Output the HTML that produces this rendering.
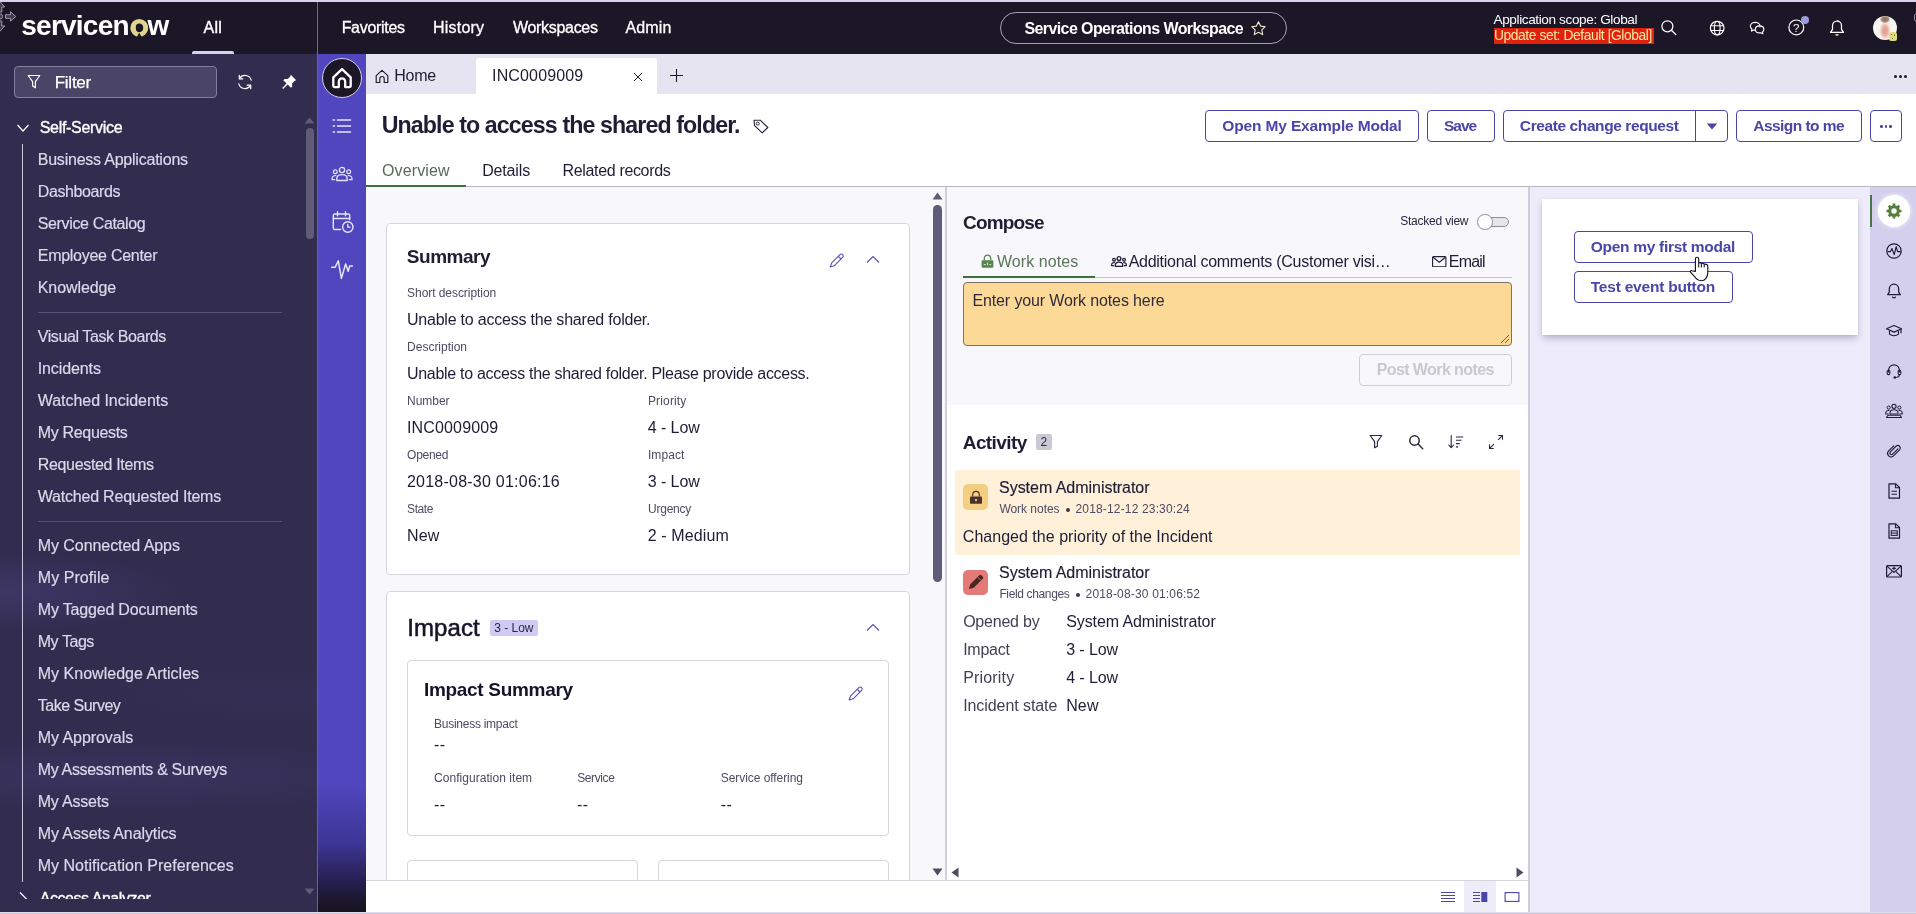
<!DOCTYPE html><html lang="en"><head><meta charset="utf-8"><title>INC0009009 | Service Operations Workspace</title><style>
html,body{margin:0;padding:0;}
body{width:1916px;height:914px;position:relative;overflow:hidden;background:#fff;font-family:"Liberation Sans", sans-serif;}
#app{position:absolute;left:0;top:0;width:1916px;height:914px;overflow:hidden;will-change:transform;}
#app>*{display:contents;}
#app>*>div,#app>*>svg,#app>*>span{position:absolute;box-sizing:border-box;}
.t,.tt{white-space:nowrap;line-height:1;display:block;}
</style></head><body><div id="app">
<div class="backdrop">
<div style="left:0px;top:0px;width:1916px;height:2px;background:#d6d2f0;"></div>
<div style="left:0px;top:2px;width:1916px;height:52px;background:#1b1727;"></div>
<div style="left:317px;top:2px;width:1px;height:52px;background:#6f6c7c;"></div>
<div style="left:0px;top:54px;width:318px;height:858px;background:#322c4f;background:radial-gradient(ellipse 190px 40px at 0 538px,rgba(72,64,122,.55),rgba(72,64,122,0) 100%),radial-gradient(ellipse 360px 36px at 110px 722px,rgba(66,59,112,.5),rgba(66,59,112,0) 100%),radial-gradient(ellipse 200px 30px at 300px 640px,rgba(60,54,100,.35),rgba(60,54,100,0) 100%),#322c4f;"></div>
<div style="left:318px;top:54px;width:48px;height:858px;background:#5046be;background:linear-gradient(180deg,#5046be 0,#5046be 730px,#3c3594 790px,#231e4a 830px,#1a1628 850px,#17131f 858px);"></div>
<div style="left:317px;top:54px;width:1px;height:858px;background:#6a6786;"></div>
<div style="left:366px;top:54px;width:1550px;height:40px;background:#e6e4f0;"></div>
<div style="left:366px;top:94px;width:1550px;height:92px;background:#ffffff;"></div>
<div style="left:366px;top:186px;width:1550px;height:1px;background:#b9b7c1;"></div>
<div style="left:366px;top:187px;width:1504px;height:693px;background:#f8f7fc;"></div>
</div>
<header class="polaris-header">
<span class="t" style="left:21.32px;top:12.00px;font-size:28px;color:#ffffff;font-weight:700;letter-spacing:-0.769px;">servicen</span><span class="t" style="left:130.62px;top:12.00px;font-size:28px;color:#e2d48c;font-weight:700;letter-spacing:-0.700px;letter-spacing:0;transform:scaleX(1.12);transform-origin:45% 50%;">o</span><span class="t" style="left:147.62px;top:12.00px;font-size:28px;color:#ffffff;font-weight:700;">w</span>
<svg style="left:129px;top:17px;" width="21" height="21" viewBox="0 0 21 21" fill="none"><circle cx="10.200" cy="10.900" r="6.600" stroke="#e2d48c" stroke-width="4.600"/><path d="M7.400 21L10.200 15.400 13 21z" fill="#1b1727"/></svg>
<svg style="left:0px;top:2px;" width="18" height="34" viewBox="0 0 18 34" fill="none"><g fill="#3f3d4a" stroke="#a9a7b4" stroke-width=".9" stroke-linejoin="round"><path d="M5.500 12.700h5V9.800l5.300 4.700-5.300 4.700v-2.900h-5z"/><path d="M-1.800 10V5H-4.700L0 -.3 4.700 5H1.800v5z"/><path d="M-1.800 19v5H-4.700L0 29.300 4.700 24H1.800v-5z"/><circle cx="0" cy="14.500" r="2.600"/></g></svg>
<span class="t" style="left:203.44px;top:20.00px;font-size:16px;color:#ffffff;letter-spacing:0.269px;-webkit-text-stroke:0.4px #ffffff;">All</span>
<div style="left:192px;top:51px;width:42px;height:3px;background:#d5d1f0;border-radius:2px 2px 0 0;"></div>
<span class="t" style="left:341.64px;top:20.00px;font-size:16px;color:#ffffff;letter-spacing:-0.297px;-webkit-text-stroke:0.3px #ffffff;">Favorites</span>
<span class="t" style="left:432.94px;top:20.00px;font-size:16px;color:#ffffff;letter-spacing:0.223px;-webkit-text-stroke:0.3px #ffffff;">History</span>
<span class="t" style="left:512.94px;top:20.00px;font-size:16px;color:#ffffff;letter-spacing:-0.302px;-webkit-text-stroke:0.3px #ffffff;">Workspaces</span>
<span class="t" style="left:625.44px;top:20.00px;font-size:16px;color:#ffffff;letter-spacing:0.140px;-webkit-text-stroke:0.3px #ffffff;">Admin</span>
<div style="left:1000px;top:12px;width:287px;height:32px;border:1px solid #a5a3b0;border-radius:16px;"></div>
<span class="t" style="left:1024.44px;top:21.00px;font-size:16px;color:#ffffff;font-weight:700;letter-spacing:-0.595px;">Service Operations Workspace</span>
<svg style="left:1250.3px;top:20px;" width="17" height="17" viewBox="0 0 17 17" fill="none"><path d="M8.5 1.8l2.05 4.3 4.7.62-3.45 3.25.87 4.66L8.5 12.35 4.33 14.63l.87-4.66L1.75 6.72l4.7-.62z" stroke="#f3ead2" stroke-width="1.1" stroke-linejoin="round"/></svg>
<span class="t" style="left:1493.52px;top:13.00px;font-size:13.6px;color:#ffffff;letter-spacing:-0.393px;">Application scope: Global</span>
<div style="left:1494px;top:28px;width:159.5px;height:15.7px;background:#e0220f;"></div>
<span class="t" style="left:1494.02px;top:29.00px;font-size:13.8px;color:#fbe7a3;letter-spacing:-0.416px;">Update set: Default [Global]</span>
<svg style="left:1660px;top:19px;" width="18" height="18" viewBox="0 0 18 18" fill="none"><circle cx="7.400" cy="7.300" r="5.500" stroke="#fff" stroke-width="1.250"/><path d="M11.400 11.300L15.800 15.500" stroke="#fff" stroke-width="1.250" stroke-linecap="round"/></svg>
<svg style="left:1708px;top:19px;" width="18" height="18" viewBox="0 0 18 18" fill="none"><circle cx="9.200" cy="9.100" r="6.800" stroke="#fff" stroke-width="1.200"/><ellipse cx="9.200" cy="9.100" rx="2.900" ry="6.800" stroke="#fff" stroke-width="1.100"/><path d="M2.700 6.700h13M2.700 11.500h13" stroke="#fff" stroke-width="1.100"/></svg>
<svg style="left:1748px;top:19px;" width="18" height="18" viewBox="0 0 18 18" fill="none"><path d="M7.200 3.300c2.700 0 4.800 1.700 4.800 3.900 0 .3 0 .5-.1.800M7.200 3.300c-2.700 0-4.800 1.700-4.800 3.900 0 1.100.6 2.100 1.500 2.800l-.4 2.100 2.300-1.100c.4.100.9.100 1.400.100" stroke="#fff" stroke-width="1.150" stroke-linejoin="round" stroke-linecap="round"/><path d="M11.600 6.900c2.400 0 4.200 1.500 4.200 3.500 0 1-.5 1.900-1.300 2.500l.3 1.900-2.100-1c-.4.100-.7.100-1.100.100-2.400 0-4.200-1.500-4.200-3.500s1.800-3.500 4.200-3.500z" stroke="#fff" stroke-width="1.150" stroke-linejoin="round"/></svg>
<svg style="left:1787px;top:18px;" width="19" height="19" viewBox="0 0 19 19" fill="none"><circle cx="9.300" cy="9.400" r="7.400" stroke="#fff" stroke-width="1.200"/></svg>
<span class="t" style="left:1792.90px;top:23.00px;font-size:11.5px;color:#ffffff;letter-spacing:-0.288px;letter-spacing:0;">?</span>
<div style="left:1801px;top:16px;width:8px;height:8px;background:#9c9cd8;border-radius:50%;"></div>
<svg style="left:1828px;top:19px;" width="18" height="18" viewBox="0 0 18 18" fill="none"><path d="M9 2c-2.700 0-4.500 2.100-4.500 4.700v3.600L2.500 13.400h13l-2-3.100V6.700C13.500 4.100 11.700 2 9 2z" stroke="#fff" stroke-width="1.250" stroke-linejoin="round"/><path d="M7.700 15.200a1.400 1.400 0 0 0 2.600 0" stroke="#fff" stroke-width="1.200"/></svg>
<div style="left:1873px;top:16px;width:24px;height:24px;background:#f8f6f3;border-radius:50%;overflow:hidden;background:radial-gradient(ellipse 5.500px 4px at 50% 14%,#8a6a55 0,#a58672 60%,rgba(200,170,150,0) 100%),radial-gradient(ellipse 5.800px 9.500px at 50% 62%,#e59a8c 0,#eab0a2 50%,#f3ddd4 80%,rgba(248,246,243,0) 100%),#f8f6f3;"></div>
<div style="left:1888.5px;top:32px;width:8.5px;height:8.5px;background:#e6da7c;border-radius:2.500px;background:radial-gradient(circle 0.700px at 30% 30%,#3f7d4a 0,#3f7d4a 90%,transparent 100%),radial-gradient(circle 0.700px at 70% 35%,#3f7d4a 0,#3f7d4a 90%,transparent 100%),radial-gradient(circle 0.700px at 45% 70%,#3f7d4a 0,#3f7d4a 90%,transparent 100%),#e6da7c;"></div>
<div style="left:1914px;top:13px;width:8px;height:8.5px;border:1px solid #8f8d9b;border-radius:3px;"></div>
</header>
<nav class="all-menu">
<div style="left:14px;top:66px;width:203px;height:32px;background:#4a4566;border:1px solid #827e9c;border-radius:4px;"></div>
<svg style="left:27px;top:74px;" width="14" height="16" viewBox="0 0 14 16" fill="none"><path d="M1.2 1.5h11.6L8.4 7.6v6.2L5.6 12V7.6z" stroke="#fff" stroke-width="1.2" stroke-linejoin="round"/></svg>
<span class="t" style="left:54.70px;top:74.00px;font-size:17px;color:#ffffff;letter-spacing:-0.248px;-webkit-text-stroke:0.25px #ffffff;">Filter</span>
<svg style="left:236px;top:73px;" width="18" height="18" viewBox="0 0 18 18" fill="none"><path d="M15.2 7.2A6.4 6.4 0 0 0 3.5 5.6M2.8 10.8a6.4 6.4 0 0 0 11.7 1.6" stroke="#fff" stroke-width="1.2" stroke-linecap="round"/><path d="M3.3 2.3v3.5h3.5M14.7 15.7v-3.5h-3.5" stroke="#fff" stroke-width="1.2" stroke-linecap="round" stroke-linejoin="round"/></svg>
<svg style="left:280px;top:73px;" width="18" height="18" viewBox="0 0 18 18" fill="none"><path d="M10.8 1.8l5.4 5.4-1.5.6-2.6 2.6.1 3.1-1.3 1.3-3.2-3.2-4.6 4.3-.9-.9 4.3-4.6-3.2-3.2 1.3-1.3 3.1.1 2.6-2.6z" fill="#fff"/></svg>
<svg style="left:16px;top:123px;" width="14" height="10" viewBox="0 0 14 10" fill="none"><path d="M1.5 2l5.5 6 5.5-6" stroke="#fff" stroke-width="1.2"/></svg>
<span class="t" style="left:39.74px;top:120.00px;font-size:16px;color:#ffffff;letter-spacing:-0.312px;-webkit-text-stroke:0.35px #ffffff;">Self-Service</span>
<div style="left:22px;top:144px;width:1px;height:738px;background:#c9c5dd;"></div>
<span class="t" style="left:37.74px;top:152.00px;font-size:16px;color:#dbd8ea;letter-spacing:-0.222px;-webkit-text-stroke:0.2px #dbd8ea;">Business Applications</span>
<span class="t" style="left:37.74px;top:184.00px;font-size:16px;color:#dbd8ea;letter-spacing:-0.385px;-webkit-text-stroke:0.2px #dbd8ea;">Dashboards</span>
<span class="t" style="left:37.74px;top:216.00px;font-size:16px;color:#dbd8ea;letter-spacing:-0.352px;-webkit-text-stroke:0.2px #dbd8ea;">Service Catalog</span>
<span class="t" style="left:37.74px;top:248.00px;font-size:16px;color:#dbd8ea;letter-spacing:-0.272px;-webkit-text-stroke:0.2px #dbd8ea;">Employee Center</span>
<span class="t" style="left:37.74px;top:280.00px;font-size:16px;color:#dbd8ea;letter-spacing:-0.081px;-webkit-text-stroke:0.2px #dbd8ea;">Knowledge</span>
<span class="t" style="left:37.74px;top:329.00px;font-size:16px;color:#dbd8ea;letter-spacing:-0.404px;-webkit-text-stroke:0.2px #dbd8ea;">Visual Task Boards</span>
<span class="t" style="left:37.74px;top:361.00px;font-size:16px;color:#dbd8ea;letter-spacing:-0.103px;-webkit-text-stroke:0.2px #dbd8ea;">Incidents</span>
<span class="t" style="left:37.74px;top:393.00px;font-size:16px;color:#dbd8ea;letter-spacing:-0.038px;-webkit-text-stroke:0.2px #dbd8ea;">Watched Incidents</span>
<span class="t" style="left:37.74px;top:425.00px;font-size:16px;color:#dbd8ea;letter-spacing:-0.326px;-webkit-text-stroke:0.2px #dbd8ea;">My Requests</span>
<span class="t" style="left:37.74px;top:457.00px;font-size:16px;color:#dbd8ea;letter-spacing:-0.331px;-webkit-text-stroke:0.2px #dbd8ea;">Requested Items</span>
<span class="t" style="left:37.74px;top:489.00px;font-size:16px;color:#dbd8ea;letter-spacing:-0.202px;-webkit-text-stroke:0.2px #dbd8ea;">Watched Requested Items</span>
<span class="t" style="left:37.74px;top:538.00px;font-size:16px;color:#dbd8ea;letter-spacing:-0.061px;-webkit-text-stroke:0.2px #dbd8ea;">My Connected Apps</span>
<span class="t" style="left:37.74px;top:570.00px;font-size:16px;color:#dbd8ea;letter-spacing:0.066px;-webkit-text-stroke:0.2px #dbd8ea;">My Profile</span>
<span class="t" style="left:37.74px;top:602.00px;font-size:16px;color:#dbd8ea;letter-spacing:-0.179px;-webkit-text-stroke:0.2px #dbd8ea;">My Tagged Documents</span>
<span class="t" style="left:37.74px;top:634.00px;font-size:16px;color:#dbd8ea;letter-spacing:-0.444px;-webkit-text-stroke:0.2px #dbd8ea;">My Tags</span>
<span class="t" style="left:37.74px;top:666.00px;font-size:16px;color:#dbd8ea;letter-spacing:0.018px;-webkit-text-stroke:0.2px #dbd8ea;">My Knowledge Articles</span>
<span class="t" style="left:37.74px;top:698.00px;font-size:16px;color:#dbd8ea;letter-spacing:-0.493px;-webkit-text-stroke:0.2px #dbd8ea;">Take Survey</span>
<span class="t" style="left:37.74px;top:730.00px;font-size:16px;color:#dbd8ea;letter-spacing:-0.057px;-webkit-text-stroke:0.2px #dbd8ea;">My Approvals</span>
<span class="t" style="left:37.74px;top:762.00px;font-size:16px;color:#dbd8ea;letter-spacing:-0.338px;-webkit-text-stroke:0.2px #dbd8ea;">My Assessments &amp; Surveys</span>
<span class="t" style="left:37.74px;top:794.00px;font-size:16px;color:#dbd8ea;letter-spacing:-0.211px;-webkit-text-stroke:0.2px #dbd8ea;">My Assets</span>
<span class="t" style="left:37.74px;top:826.00px;font-size:16px;color:#dbd8ea;letter-spacing:-0.093px;-webkit-text-stroke:0.2px #dbd8ea;">My Assets Analytics</span>
<span class="t" style="left:37.74px;top:858.00px;font-size:16px;color:#dbd8ea;letter-spacing:0.015px;-webkit-text-stroke:0.2px #dbd8ea;">My Notification Preferences</span>
<div style="left:38px;top:312px;width:244px;height:1px;background:#57536f;"></div>
<div style="left:38px;top:521px;width:244px;height:1px;background:#57536f;"></div>
<div style="left:0;top:884px;width:300px;height:14.5px;overflow:hidden;"><span class="tt" style="position:absolute;left:39.7px;top:6.900px;font-size:16px;color:#fff;letter-spacing:-0.45px;-webkit-text-stroke:0.35px #fff;">Access Analyzer</span><svg style="position:absolute;left:18px;top:6.500px" width="10" height="16" viewBox="0 0 10 16" fill="none"><path d="M2 1.500l6.500 6.500-6.500 6.500" stroke="#fff" stroke-width="1.200"/></svg></div>
<div style="left:305.5px;top:127.5px;width:8.5px;height:111px;background:#5f5b78;border-radius:4.5px;"></div>
<svg style="left:304px;top:117px;" width="11" height="7" viewBox="0 0 11 7" fill="none"><path d="M0.5 6.5L5.5 0.5l5 6z" fill="#5f5b78"/></svg>
<svg style="left:304px;top:888px;" width="11" height="7" viewBox="0 0 11 7" fill="none"><path d="M0.5 0.5L5.5 6.5l5-6z" fill="#5f5b78"/></svg>
</nav>
<nav class="workspace-rail">
<div style="left:322px;top:58px;width:40px;height:40px;background:#1b1727;border-radius:50%;border:1px solid #d5d1f0;"></div>
<svg style="left:330px;top:66px;" width="24" height="24" viewBox="0 0 24 24" fill="none"><path d="M3.300 11.300L12 3.100l8.700 8.200v8.200a1.600 1.600 0 0 1-1.600 1.600h-3.900v-5.600a3.200 3.200 0 0 0-6.400 0v5.600H4.900a1.600 1.600 0 0 1-1.600-1.600z" stroke="#fff" stroke-width="2.300" stroke-linejoin="round"/></svg>
<svg style="left:332px;top:117px;" width="20" height="18" viewBox="0 0 20 18" fill="none"><path d="M5.5 3h13M5.5 9h13M5.5 15h13" stroke="#e8e5fa" stroke-width="1.5" stroke-linecap="round"/><path d="M1.2 3h1.3M1.2 9h1.3M1.2 15h1.3" stroke="#e8e5fa" stroke-width="1.5" stroke-linecap="round"/></svg>
<svg style="left:331px;top:165px;" width="22" height="18" viewBox="0 0 22 18" fill="none"><circle cx="11" cy="5" r="2.6" stroke="#e8e5fa" stroke-width="1.3"/><path d="M5.8 15.5v-1.8c0-2.4 2-4 5.2-4s5.2 1.600 5.200 4v1.800z" stroke="#e8e5fa" stroke-width="1.3" stroke-linejoin="round"/><circle cx="4.3" cy="6.800" r="1.9" stroke="#e8e5fa" stroke-width="1.2"/><circle cx="17.7" cy="6.800" r="1.9" stroke="#e8e5fa" stroke-width="1.2"/><path d="M5.300 10.600c-2.500-.4-4.300.9-4.300 2.800v1.300h3.200M16.700 10.600c2.500-.4 4.300.9 4.300 2.800v1.300h-3.200" stroke="#e8e5fa" stroke-width="1.2" stroke-linejoin="round"/></svg>
<svg style="left:331px;top:210px;" width="24" height="24" viewBox="0 0 24 24" fill="none"><path d="M9.500 19.500H3.800a1.500 1.500 0 0 1-1.500-1.500V5.500A1.500 1.500 0 0 1 3.800 4h13.400a1.500 1.500 0 0 1 1.500 1.500v4.300" stroke="#e8e5fa" stroke-width="1.4" stroke-linecap="round"/><path d="M6.500 1.800v4M14.500 1.800v4M2.500 8.500h16" stroke="#e8e5fa" stroke-width="1.400" stroke-linecap="round"/><circle cx="16.800" cy="17" r="5.200" stroke="#e8e5fa" stroke-width="1.400"/><path d="M16.800 14.300V17.200h2.200" stroke="#e8e5fa" stroke-width="1.300" stroke-linecap="round" stroke-linejoin="round"/></svg>
<svg style="left:331px;top:259px;" width="22" height="21" viewBox="0 0 22 21" fill="none"><path d="M0.600 8.200h3.600l3.100-6.400 3.100 17.600 4.200-14.400 2.600 7.200 1.500-5.200h2.800" stroke="#e8e5fa" stroke-width="1.500" stroke-linejoin="round" stroke-linecap="round"/></svg>
</nav>
<div class="chrome-tabs">
<svg style="left:375px;top:69px;" width="14" height="15" viewBox="0 0 14 15" fill="none"><path d="M1.2 6.6L7 1.3l5.8 5.3v6.9H9.200V9.700a2.200 2.200 0 0 0-4.400 0v3.800H1.200z" stroke="#1d1a2e" stroke-width="1.15" stroke-linejoin="round"/></svg>
<span class="t" style="left:394.24px;top:68.00px;font-size:16px;color:#1f1c33;letter-spacing:-0.223px;">Home</span>
<div style="left:476px;top:58px;width:181px;height:36px;background:#ffffff;border-radius:3px 3px 0 0;"></div>
<span class="t" style="left:492.04px;top:68.00px;font-size:16px;color:#1f1c33;letter-spacing:0.153px;">INC0009009</span>
<svg style="left:632px;top:71px;" width="12" height="12" viewBox="0 0 12 12" fill="none"><path d="M2 2l8 8M10 2l-8 8" stroke="#1d1a2e" stroke-width="1"/></svg>
<svg style="left:669px;top:68px;" width="16" height="16" viewBox="0 0 16 16" fill="none"><path d="M7.500 1v13M1 7.500h13" stroke="#1d1a2e" stroke-width="1.100"/></svg>
<div style="left:1893.5px;top:74.5px;width:3px;height:3px;background:#1d1a2e;border-radius:50%;"></div>
<div style="left:1898.5px;top:74.5px;width:3px;height:3px;background:#1d1a2e;border-radius:50%;"></div>
<div style="left:1903.5px;top:74.5px;width:3px;height:3px;background:#1d1a2e;border-radius:50%;"></div>
</div>
<section class="record-header">
<span class="t" style="left:381.69px;top:114.00px;font-size:23.2px;color:#1f1c33;font-weight:700;letter-spacing:-0.894px;">Unable to access the shared folder.</span>
<svg style="left:752px;top:118px;" width="18" height="16" viewBox="0 0 18 16" fill="none"><path d="M2 2.200h6.200l7.600 7.300-5.600 5.400L2.600 7.600z" stroke="#2a2740" stroke-width="1.15" stroke-linejoin="round"/><circle cx="5.800" cy="5.600" r="1.500" stroke="#2a2740" stroke-width="1"/></svg>
<span class="t" style="left:381.94px;top:163.00px;font-size:16px;color:#586b57;letter-spacing:0.133px;">Overview</span>
<span class="t" style="left:482.14px;top:163.00px;font-size:16px;color:#1f1c33;letter-spacing:-0.148px;">Details</span>
<span class="t" style="left:562.44px;top:163.00px;font-size:16px;color:#1f1c33;letter-spacing:-0.331px;">Related records</span>
<div style="left:366px;top:184.5px;width:100px;height:2.5px;background:#3f6f3f;"></div>
<div style="left:1205px;top:110px;width:214px;height:32px;background:#fff;border:1px solid #4a46a8;border-radius:4px;"></div>
<span class="t" style="left:1222.36px;top:118.00px;font-size:15.5px;color:#4a46a8;font-weight:700;letter-spacing:-0.155px;">Open My Example Modal</span>
<div style="left:1427px;top:110px;width:68px;height:32px;background:#fff;border:1px solid #4a46a8;border-radius:4px;"></div>
<span class="t" style="left:1444.06px;top:118.00px;font-size:15.5px;color:#4a46a8;font-weight:700;letter-spacing:-1.064px;">Save</span>
<div style="left:1503px;top:110px;width:225px;height:32px;background:#fff;border:1px solid #4a46a8;border-radius:4px;"></div>
<span class="t" style="left:1519.86px;top:118.00px;font-size:15.5px;color:#4a46a8;font-weight:700;letter-spacing:-0.401px;">Create change request</span>
<div style="left:1695px;top:110px;width:1px;height:32px;background:#4a46a8;"></div>
<svg style="left:1706px;top:123px;" width="12" height="7" viewBox="0 0 12 7" fill="none"><path d="M0.800 0.500h10.400L6 6.500z" fill="#4a46a8"/></svg>
<div style="left:1736px;top:110px;width:126px;height:32px;background:#fff;border:1px solid #4a46a8;border-radius:4px;"></div>
<span class="t" style="left:1753.26px;top:118.00px;font-size:15.5px;color:#4a46a8;font-weight:700;letter-spacing:-0.547px;">Assign to me</span>
<div style="left:1870px;top:110px;width:32px;height:32px;background:#fff;border:1px solid #4a46a8;border-radius:4px;"></div>
<div style="left:1880px;top:125px;width:2.6px;height:2.6px;background:#4a46a8;border-radius:50%;"></div>
<div style="left:1884.7px;top:125px;width:2.6px;height:2.6px;background:#4a46a8;border-radius:50%;"></div>
<div style="left:1889.4px;top:125px;width:2.6px;height:2.6px;background:#4a46a8;border-radius:50%;"></div>
</section>
<main class="overview-panel">
<div style="left:386px;top:223px;width:524px;height:352px;background:#fff;border:1px solid #d7d6de;border-radius:4px;"></div>
<span class="t" style="left:406.83px;top:247.00px;font-size:19px;color:#1f1c33;font-weight:700;letter-spacing:-0.488px;">Summary</span>
<svg style="left:828.8px;top:252.5px;" width="15.5" height="15.5" viewBox="0 0 15.5 15.5" fill="none"><path d="M10.900 1.700a1.900 1.900 0 0 1 2.700 2.700L5.200 12.800l-3.900 1.200 1.200-3.900z" stroke="#5551b3" stroke-width="1.1" stroke-linejoin="round"/><path d="M9.300 3.300l2.700 2.700" stroke="#5551b3" stroke-width="1.100"/></svg>
<svg style="left:866px;top:255px;" width="14" height="9" viewBox="0 0 14 9" fill="none"><path d="M1 7.500l6-6 6 6" stroke="#5551b3" stroke-width="1.1"/></svg>
<span class="t" style="left:407.08px;top:287.00px;font-size:12px;color:#4d4b62;letter-spacing:-0.057px;">Short description</span>
<span class="t" style="left:406.94px;top:312.00px;font-size:16px;color:#1f1c33;letter-spacing:-0.212px;">Unable to access the shared folder.</span>
<span class="t" style="left:407.08px;top:341.00px;font-size:12px;color:#4d4b62;letter-spacing:-0.009px;">Description</span>
<span class="t" style="left:406.94px;top:366.00px;font-size:16px;color:#1f1c33;letter-spacing:-0.298px;">Unable to access the shared folder. Please provide access.</span>
<span class="t" style="left:407.08px;top:395.00px;font-size:12px;color:#4d4b62;letter-spacing:-0.050px;">Number</span>
<span class="t" style="left:406.94px;top:420.00px;font-size:16px;color:#1f1c33;letter-spacing:0.164px;">INC0009009</span>
<span class="t" style="left:407.08px;top:449.00px;font-size:12px;color:#4d4b62;letter-spacing:-0.273px;">Opened</span>
<span class="t" style="left:406.94px;top:474.00px;font-size:16px;color:#1f1c33;letter-spacing:0.236px;">2018-08-30 01:06:16</span>
<span class="t" style="left:407.08px;top:503.00px;font-size:12px;color:#4d4b62;letter-spacing:-0.448px;">State</span>
<span class="t" style="left:406.94px;top:528.00px;font-size:16px;color:#1f1c33;letter-spacing:0.152px;">New</span>
<span class="t" style="left:647.98px;top:395.00px;font-size:12px;color:#4d4b62;letter-spacing:0.142px;">Priority</span>
<span class="t" style="left:647.84px;top:420.00px;font-size:16px;color:#1f1c33;letter-spacing:-0.091px;">4 - Low</span>
<span class="t" style="left:647.98px;top:449.00px;font-size:12px;color:#4d4b62;letter-spacing:0.065px;">Impact</span>
<span class="t" style="left:647.84px;top:474.00px;font-size:16px;color:#1f1c33;letter-spacing:-0.091px;">3 - Low</span>
<span class="t" style="left:647.98px;top:503.00px;font-size:12px;color:#4d4b62;letter-spacing:-0.225px;">Urgency</span>
<span class="t" style="left:647.84px;top:528.00px;font-size:16px;color:#1f1c33;letter-spacing:0.099px;">2 - Medium</span>
<div style="left:386px;top:591px;width:524px;height:320px;background:#fff;border:1px solid #d7d6de;border-radius:4px;"></div>
<span class="t" style="left:407.16px;top:616.00px;font-size:24px;color:#17142a;letter-spacing:0.110px;-webkit-text-stroke:0.55px #17142a;">Impact</span>
<div style="left:490px;top:620px;width:48px;height:16px;background:#cfcbf3;border-radius:2px;"></div>
<span class="t" style="left:494.28px;top:622.00px;font-size:12px;color:#2a2740;letter-spacing:-0.020px;">3 - Low</span>
<svg style="left:866px;top:623px;" width="14" height="9" viewBox="0 0 14 9" fill="none"><path d="M1 7.500l6-6 6 6" stroke="#5551b3" stroke-width="1.1"/></svg>
<div style="left:407px;top:660px;width:482px;height:175.5px;background:#fff;border:1px solid #d7d6de;border-radius:4px;"></div>
<span class="t" style="left:423.94px;top:680.00px;font-size:19px;color:#17142a;font-weight:700;letter-spacing:-0.303px;">Impact Summary</span>
<svg style="left:847.8px;top:685.5px;" width="15.5" height="15.5" viewBox="0 0 15.5 15.5" fill="none"><path d="M10.900 1.700a1.900 1.900 0 0 1 2.700 2.700L5.200 12.800l-3.900 1.200 1.200-3.900z" stroke="#5551b3" stroke-width="1.1" stroke-linejoin="round"/><path d="M9.300 3.300l2.700 2.700" stroke="#5551b3" stroke-width="1.100"/></svg>
<span class="t" style="left:434.08px;top:718.00px;font-size:12px;color:#4d4b62;letter-spacing:-0.267px;">Business impact</span>
<span class="t" style="left:433.94px;top:737.00px;font-size:16px;color:#1f1c33;letter-spacing:0.364px;">--</span>
<span class="t" style="left:434.08px;top:772.00px;font-size:12px;color:#4d4b62;letter-spacing:0.038px;">Configuration item</span>
<span class="t" style="left:433.94px;top:797.00px;font-size:16px;color:#1f1c33;letter-spacing:0.364px;">--</span>
<span class="t" style="left:577.18px;top:772.00px;font-size:12px;color:#4d4b62;letter-spacing:-0.396px;">Service</span>
<span class="t" style="left:577.04px;top:797.00px;font-size:16px;color:#1f1c33;letter-spacing:0.364px;">--</span>
<span class="t" style="left:720.78px;top:772.00px;font-size:12px;color:#4d4b62;letter-spacing:-0.061px;">Service offering</span>
<span class="t" style="left:720.64px;top:797.00px;font-size:16px;color:#1f1c33;letter-spacing:0.464px;">--</span>
<div style="left:407px;top:860px;width:231px;height:40px;background:#fff;border:1px solid #d7d6de;border-radius:4px;"></div>
<div style="left:658px;top:860px;width:231px;height:40px;background:#fff;border:1px solid #d7d6de;border-radius:4px;"></div>
<svg style="left:932px;top:192px;" width="11" height="8" viewBox="0 0 11 8" fill="none"><path d="M0.500 7.500L5.500 0.500l5 7z" fill="#5f5c78"/></svg>
<div style="left:933px;top:205px;width:9px;height:377px;background:#5f5c78;border-radius:4.500px;"></div>
<svg style="left:932px;top:868px;" width="11" height="8" viewBox="0 0 11 8" fill="none"><path d="M0.500 0.500L5.500 7.500l5-7z" fill="#4f4d60"/></svg>
<div style="left:945px;top:187px;width:2px;height:693px;background:#d2d0da;"></div>
</main>
<section class="activity-panel">
<div style="left:947px;top:405px;width:581px;height:475px;background:#ffffff;"></div>
<span class="t" style="left:963.04px;top:213.00px;font-size:19px;color:#1f1c33;font-weight:700;letter-spacing:-0.850px;">Compose</span>
<span class="t" style="left:1400.18px;top:215.00px;font-size:12px;color:#2a2740;letter-spacing:-0.215px;">Stacked view</span>
<div style="left:1479px;top:217px;width:30px;height:10px;background:#e6e5ea;border:1px solid #8f8d99;border-radius:5px;"></div>
<div style="left:1477px;top:214px;width:15.5px;height:15.5px;background:#ffffff;border:1px solid #8f8d99;border-radius:50%;"></div>
<svg style="left:980.5px;top:253.7px;" width="13" height="14" viewBox="0 0 13 14" fill="none"><path d="M3.300 6.300V4.300a3.200 3.200 0 0 1 6.400 0v2" stroke="#568552" stroke-width="1.250"/><rect x=".6" y="6.300" width="11.800" height="7.400" rx="1.200" fill="#568552"/><path d="M2.800 10.600h2M8.200 10.600h2M6.500 8.600v2.600" stroke="#eef3ea" stroke-width=".9"/></svg>
<span class="t" style="left:996.94px;top:254.00px;font-size:16px;color:#5c755b;letter-spacing:0.066px;">Work notes</span>
<div style="left:963px;top:276px;width:132px;height:2px;background:#3f6f3f;"></div>
<div style="left:1095px;top:277px;width:417px;height:1px;background:#c4c2cc;"></div>
<svg style="left:1111px;top:255px;" width="16" height="12" viewBox="0 0 16 12" fill="none"><circle cx="8" cy="3.600" r="1.900" stroke="#1f1c33" stroke-width="1.300"/><path d="M4.300 11.300V10c0-1.800 1.500-2.900 3.700-2.900s3.700 1.100 3.700 2.900v1.300z" stroke="#1f1c33" stroke-width="1.300" stroke-linejoin="round"/><circle cx="3" cy="4.800" r="1.400" stroke="#1f1c33" stroke-width="1.200"/><circle cx="13" cy="4.800" r="1.400" stroke="#1f1c33" stroke-width="1.200"/><path d="M3.800 7.700C2 7.400.600 8.300.600 9.700v.900h2.500M12.200 7.700c1.800-.3 3.200.600 3.200 2v.900h-2.500" stroke="#1f1c33" stroke-width="1.200" stroke-linejoin="round"/></svg>
<span class="t" style="left:1128.64px;top:254.00px;font-size:16px;color:#1f1c33;letter-spacing:-0.267px;">Additional comments (Customer visi…</span>
<svg style="left:1432px;top:255.5px;" width="14.5" height="11.5" viewBox="0 0 14.5 11.5" fill="none"><rect x=".6" y=".6" width="13.300" height="10.300" rx="1" stroke="#1f1c33" stroke-width="1.1"/><path d="M1 1.200l6.250 5 6.250-5" stroke="#1f1c33" stroke-width="1.100"/></svg>
<span class="t" style="left:1448.84px;top:254.00px;font-size:16px;color:#1f1c33;letter-spacing:-0.824px;">Email</span>
<div style="left:963px;top:282px;width:549px;height:64px;background:#fdd998;border:1px solid #7d7465;border-radius:4px;"></div>
<span class="t" style="left:972.44px;top:293.00px;font-size:16px;color:#2e2a3a;letter-spacing:-0.122px;">Enter your Work notes here</span>
<svg style="left:1500px;top:334px;" width="10" height="10" viewBox="0 0 10 10" fill="none"><path d="M9 1L1 9M9 5L5 9" stroke="#6b6250" stroke-width="1"/></svg>
<div style="left:1359px;top:354px;width:153px;height:32px;border:1px solid #cfced6;border-radius:4px;"></div>
<span class="t" style="left:1376.64px;top:362.00px;font-size:16px;color:#c9c8d0;font-weight:700;letter-spacing:-0.581px;">Post Work notes</span>
<span class="t" style="left:962.74px;top:433.00px;font-size:19px;color:#1f1c33;font-weight:700;letter-spacing:-0.580px;">Activity</span>
<div style="left:1036px;top:434px;width:16px;height:16px;background:#cbc9d4;border-radius:2px;"></div>
<span class="t" style="left:1040.38px;top:436.00px;font-size:12px;color:#2a2740;letter-spacing:-0.300px;letter-spacing:0;">2</span>
<svg style="left:1369px;top:434px;" width="14" height="16" viewBox="0 0 14 16" fill="none"><path d="M1.200 1.500h11.600L8.400 7.600v4.600L5.600 13.800V7.600z" stroke="#2a2740" stroke-width="1.150" stroke-linejoin="round"/></svg>
<svg style="left:1408px;top:434px;" width="16" height="16" viewBox="0 0 16 16" fill="none"><circle cx="6.500" cy="6.500" r="4.700" stroke="#2a2740" stroke-width="1.500"/><path d="M10.100 10.100l4.600 4.600" stroke="#2a2740" stroke-width="1.400" stroke-linecap="round"/></svg>
<svg style="left:1448px;top:434px;" width="16" height="16" viewBox="0 0 16 16" fill="none"><path d="M3.200 1.500v12M.800 11l2.400 2.600L5.600 11" stroke="#2a2740" stroke-width="1.100" stroke-linecap="round" stroke-linejoin="round"/><path d="M8 3h7.200M8 6.300h5.400M8 9.600h3.800M8 12.900h2.200" stroke="#2a2740" stroke-width="1.100"/></svg>
<svg style="left:1488px;top:434px;" width="16" height="16" viewBox="0 0 16 16" fill="none"><path d="M10.700 1.500h3.800v3.800M14.300 1.700l-3.900 3.900M5.300 14.500H1.500v-3.800M1.700 14.300l3.900-3.900" stroke="#2a2740" stroke-width="1.100" stroke-linecap="round" stroke-linejoin="round"/></svg>
<div style="left:955px;top:470px;width:565px;height:84.5px;background:#fff0da;"></div>
<div style="left:962.5px;top:484px;width:25.5px;height:26px;background:#f4cf82;border-radius:5px;"></div>
<svg style="left:968.5px;top:489.5px;" width="14" height="15" viewBox="0 0 14 15" fill="none"><path d="M3.700 6.600V4.600a3.300 3.300 0 0 1 6.600 0v2" stroke="#4a302c" stroke-width="1.150"/><rect x="1" y="6.600" width="12" height="7.200" rx=".8" fill="#4a302c"/><rect x="6.100" y="9" width="1.800" height="2.200" fill="#f4cf82"/></svg>
<span class="t" style="left:999.04px;top:480.00px;font-size:16px;color:#1f1c33;letter-spacing:-0.033px;-webkit-text-stroke:0.15px #1f1c33;">System Administrator</span>
<span class="t" style="left:999.38px;top:503.00px;font-size:12px;color:#4d4b62;letter-spacing:-0.025px;">Work notes</span>
<div style="left:1065.6px;top:507.7px;width:4.4px;height:4.4px;background:#3a3850;border-radius:50%;"></div>
<span class="t" style="left:1075.48px;top:503.00px;font-size:12px;color:#4d4b62;letter-spacing:0.161px;">2018-12-12 23:30:24</span>
<span class="t" style="left:962.84px;top:529.00px;font-size:16px;color:#1f1c33;letter-spacing:0.019px;">Changed the priority of the Incident</span>
<div style="left:962.5px;top:570px;width:25px;height:24.5px;background:#e37a76;border-radius:5px;"></div>
<svg style="left:966.5px;top:573.5px;" width="17" height="17" viewBox="0 0 17 17" fill="none"><path d="M12.300 1.200a1.400 1.400 0 0 1 2 0l1.500 1.500a1.400 1.400 0 0 1 0 2L6.800 13.700l-4.900 1.400 1.400-4.900z" fill="#4a2624"/><path d="M10.700 3.200l3.100 3.100" stroke="#e37a76" stroke-width=".9"/></svg>
<span class="t" style="left:999.04px;top:565.00px;font-size:16px;color:#1f1c33;letter-spacing:-0.033px;-webkit-text-stroke:0.15px #1f1c33;">System Administrator</span>
<span class="t" style="left:999.38px;top:588.00px;font-size:12px;color:#4d4b62;letter-spacing:-0.357px;">Field changes</span>
<div style="left:1075.8px;top:592.8px;width:4.4px;height:4.4px;background:#3a3850;border-radius:50%;"></div>
<span class="t" style="left:1085.58px;top:588.00px;font-size:12px;color:#4d4b62;letter-spacing:0.167px;">2018-08-30 01:06:52</span>
<span class="t" style="left:963.14px;top:614.00px;font-size:16px;color:#413f56;letter-spacing:-0.220px;">Opened by</span>
<span class="t" style="left:1066.14px;top:614.00px;font-size:16px;color:#1f1c33;letter-spacing:-0.081px;">System Administrator</span>
<span class="t" style="left:963.14px;top:642.00px;font-size:16px;color:#413f56;letter-spacing:-0.259px;">Impact</span>
<span class="t" style="left:1066.14px;top:642.00px;font-size:16px;color:#1f1c33;letter-spacing:-0.091px;">3 - Low</span>
<span class="t" style="left:963.14px;top:670.00px;font-size:16px;color:#413f56;letter-spacing:0.191px;">Priority</span>
<span class="t" style="left:1066.14px;top:670.00px;font-size:16px;color:#1f1c33;letter-spacing:-0.091px;">4 - Low</span>
<span class="t" style="left:963.14px;top:698.00px;font-size:16px;color:#413f56;letter-spacing:-0.073px;">Incident state</span>
<span class="t" style="left:1066.14px;top:698.00px;font-size:16px;color:#1f1c33;letter-spacing:0.152px;">New</span>
<svg style="left:951px;top:867px;" width="8" height="11" viewBox="0 0 8 11" fill="none"><path d="M7.500 0.500L0.500 5.500l7 5z" fill="#4f4d60"/></svg>
<svg style="left:1516px;top:867px;" width="8" height="11" viewBox="0 0 8 11" fill="none"><path d="M0.500 0.500L7.500 5.500l-7 5z" fill="#4f4d60"/></svg>
</section>
<footer class="layout-toggle">
<div style="left:366px;top:880px;width:1162px;height:32px;background:#ffffff;border-top:1px solid #d6d5dc;"></div>
<div style="left:1464px;top:881px;width:32px;height:31px;background:#efecfa;"></div>
<svg style="left:1440px;top:891px;" width="16" height="12" viewBox="0 0 16 12" fill="none"><path d="M1 1.500h14M1 4.500h14M1 7.500h14M1 10.500h14" stroke="#4a46a8" stroke-width="1"/></svg>
<svg style="left:1472px;top:891px;" width="16" height="12" viewBox="0 0 16 12" fill="none"><path d="M1 1.500h7M1 4.500h7M1 7.500h7M1 10.500h7" stroke="#4a46a8" stroke-width="1"/><rect x="9.300" y="1" width="6" height="10" fill="#4a46a8"/></svg>
<svg style="left:1504px;top:891px;" width="16" height="12" viewBox="0 0 16 12" fill="none"><rect x="1.100" y="1.600" width="13.800" height="8.800" stroke="#4a46a8" stroke-width="1.100"/></svg>
</footer>
<aside class="contextual-panel">
<div style="left:1528px;top:187px;width:2px;height:725px;background:#cecdd8;"></div>
<div style="left:1530px;top:187px;width:340px;height:725px;background:#eeebfa;"></div>
<div style="left:1542px;top:199px;width:316px;height:136px;background:#ffffff;box-shadow:0 4px 7px -1px rgba(40,30,90,.30),0 0 1px rgba(40,30,90,.12);"></div>
<div style="left:1574px;top:231px;width:179px;height:32px;background:#fff;border:1px solid #4a46a8;border-radius:4px;"></div>
<span class="t" style="left:1590.76px;top:239.00px;font-size:15.5px;color:#4a46a8;font-weight:700;letter-spacing:-0.293px;">Open my first modal</span>
<div style="left:1574px;top:271px;width:159px;height:32px;background:#fff;border:1px solid #4a46a8;border-radius:4px;"></div>
<span class="t" style="left:1590.76px;top:279.00px;font-size:15.5px;color:#4a46a8;font-weight:700;letter-spacing:-0.220px;">Test event button</span>
<svg style="left:1689px;top:256px;" width="20" height="26" viewBox="0 0 20 26" fill="none"><path d="M6.400 15.400V2.900a1.650 1.650 0 0 1 3.300 0V7c.9-.5 2.200-.3 2.700.5.900-.4 2.200-.1 2.800.7 1.200-.4 3.600.2 3.600 2v6.300c0 4.500-2.600 8.200-6.800 8.200-3.300 0-5-1.900-6.600-4.400L1.500 16.200c-.6-1 .4-2 1.400-1.500z" fill="#fff" stroke="#15121f" stroke-width="1.150" stroke-linejoin="round"/><path d="M9.700 7v4.500M12.400 7.600v3.900M15.200 8.300v3.200" stroke="#15121f" stroke-width="1.050"/></svg>
</aside>
<nav class="contextual-rail">
<div style="left:1870px;top:187px;width:46px;height:725px;background:#d5cfee;"></div>
<div style="left:1870px;top:195px;width:2px;height:32px;background:#467546;"></div>
<div style="left:1878px;top:195px;width:32px;height:32px;background:#ffffff;border-radius:50%;box-shadow:0 0 4px rgba(255,255,255,.9);"></div>
<svg style="left:1885.0px;top:202.0px;" width="18" height="18" viewBox="0 0 18 18" fill="none"><circle cx="9" cy="9" r="4.300" stroke="#557d3c" stroke-width="3.100"/><g stroke="#557d3c" stroke-width="2.700"><path d="M9 1.500v2.500M9 14v2.500M1.500 9h2.500M14 9h2.500M3.700 3.700l1.800 1.800M12.500 12.500l1.800 1.800M3.700 14.300l1.800-1.800M12.500 5.500l1.800-1.800"/></g></svg>
<svg style="left:1885.0px;top:242.0px;" width="18" height="18" viewBox="0 0 18 18" fill="none"><circle cx="9" cy="9" r="7.200" stroke="#1f1c33" stroke-width="1.200"/><path d="M2.500 9.600h3l1.500-3 2.200 6 2-8 1.400 5h3.200" stroke="#1f1c33" stroke-width="1.150" stroke-linejoin="round"/></svg>
<svg style="left:1885.0px;top:282.0px;" width="18" height="18" viewBox="0 0 18 18" fill="none"><path d="M9 2.200c-2.900 0-4.700 2.200-4.700 4.900v3.100L2.700 12.700h12.600l-1.600-2.500V7.100c0-2.700-1.800-4.900-4.700-4.900z" stroke="#1f1c33" stroke-width="1.250" stroke-linejoin="round"/><path d="M7.300 14.600a1.800 1.800 0 0 0 3.400 0" stroke="#1f1c33" stroke-width="1.250"/></svg>
<svg style="left:1885.0px;top:322.0px;" width="18" height="18" viewBox="0 0 18 18" fill="none"><path d="M1.500 6.800L9 3.500l7.500 3.300L9 10.100z" stroke="#1f1c33" stroke-width="1.150" stroke-linejoin="round"/><path d="M4.500 8.400v3.700c1.200 1.100 2.700 1.600 4.500 1.600s3.300-.5 4.500-1.600V8.400M16 7v4.200" stroke="#1f1c33" stroke-width="1.150" stroke-linejoin="round"/></svg>
<svg style="left:1885.0px;top:362.0px;" width="18" height="18" viewBox="0 0 18 18" fill="none"><path d="M3.600 10.500V8.200a5.400 5.400 0 0 1 10.800 0v2.300" stroke="#1f1c33" stroke-width="1.200"/><rect x="2.200" y="8.200" width="2.600" height="4.400" rx="1.100" stroke="#1f1c33" stroke-width="1.100"/><rect x="13.200" y="8.200" width="2.600" height="4.400" rx="1.100" stroke="#1f1c33" stroke-width="1.100"/><path d="M14.500 12.600c0 1.700-1.300 2.700-3.300 2.900" stroke="#1f1c33" stroke-width="1.100"/><circle cx="9.800" cy="15.500" r="1.300" fill="#1f1c33"/></svg>
<svg style="left:1885.0px;top:402.0px;" width="18" height="18" viewBox="0 0 18 18" fill="none"><circle cx="9" cy="4.300" r="2.100" stroke="#1f1c33" stroke-width="1.100"/><circle cx="3.700" cy="5.600" r="1.600" stroke="#1f1c33" stroke-width="1"/><circle cx="14.300" cy="5.600" r="1.600" stroke="#1f1c33" stroke-width="1"/><path d="M5 12V10.800c0-1.900 1.600-3.100 4-3.100s4 1.200 4 3.100V12zM4.400 8.500c-2-.3-3.600.7-3.600 2.200v1.300h2.800M13.600 8.500c2-.3 3.600.7 3.600 2.200v1.300h-2.800" stroke="#1f1c33" stroke-width="1.050" stroke-linejoin="round"/><path d="M1.500 15.500h15l-1.500-2.300H3z" stroke="#1f1c33" stroke-width="1.050" stroke-linejoin="round"/></svg>
<svg style="left:1885.0px;top:442.0px;" width="18" height="18" viewBox="0 0 18 18" fill="none"><path d="M13.700 6.300l-6.300 6.300a1.900 1.900 0 0 1-2.700-2.700l7-7a3 3 0 0 1 4.200 4.200l-7.400 7.400a4.100 4.100 0 0 1-5.800-5.800l6-6" stroke="#1f1c33" stroke-width="1.350" stroke-linecap="round" transform="translate(1.400,1.600) scale(.84)"/></svg>
<svg style="left:1885.0px;top:482.0px;" width="18" height="18" viewBox="0 0 18 18" fill="none"><path d="M4 1.800h6.800l3.700 3.700v10.700H4z" stroke="#1f1c33" stroke-width="1.200" stroke-linejoin="round"/><path d="M10.500 2v3.800h3.800M6.500 9.300h5.500M6.500 12.300h5.500" stroke="#1f1c33" stroke-width="1.100"/></svg>
<svg style="left:1885.0px;top:522.0px;" width="18" height="18" viewBox="0 0 18 18" fill="none"><path d="M4 1.800h6.800l3.700 3.700v10.700H4z" stroke="#1f1c33" stroke-width="1.200" stroke-linejoin="round"/><path d="M10.500 2v3.800h3.800" stroke="#1f1c33" stroke-width="1.100"/><rect x="6.200" y="8.800" width="6" height="4.600" stroke="#1f1c33" stroke-width="1"/><path d="M6.200 11.100h6" stroke="#1f1c33" stroke-width="1"/></svg>
<svg style="left:1885.0px;top:562.0px;" width="18" height="18" viewBox="0 0 18 18" fill="none"><rect x="1.600" y="3.600" width="14.800" height="11.400" rx="1" stroke="#1f1c33" stroke-width="1.200"/><path d="M2 14.600l5-5M16 14.600l-5-5M2 4.200l7 6.300 7-6.300" stroke="#1f1c33" stroke-width="1.050"/><path d="M9 4.600v3.600M7.200 6.400h3.600" stroke="#1f1c33" stroke-width="1.100"/></svg>
<div style="left:0px;top:912px;width:1916px;height:2px;background:linear-gradient(180deg,rgba(190,188,205,.45) 0,rgba(190,188,205,.45) 1px,#c6c4d4 1px,#c6c4d4 2px);"></div>
</nav>
</div></body></html>
